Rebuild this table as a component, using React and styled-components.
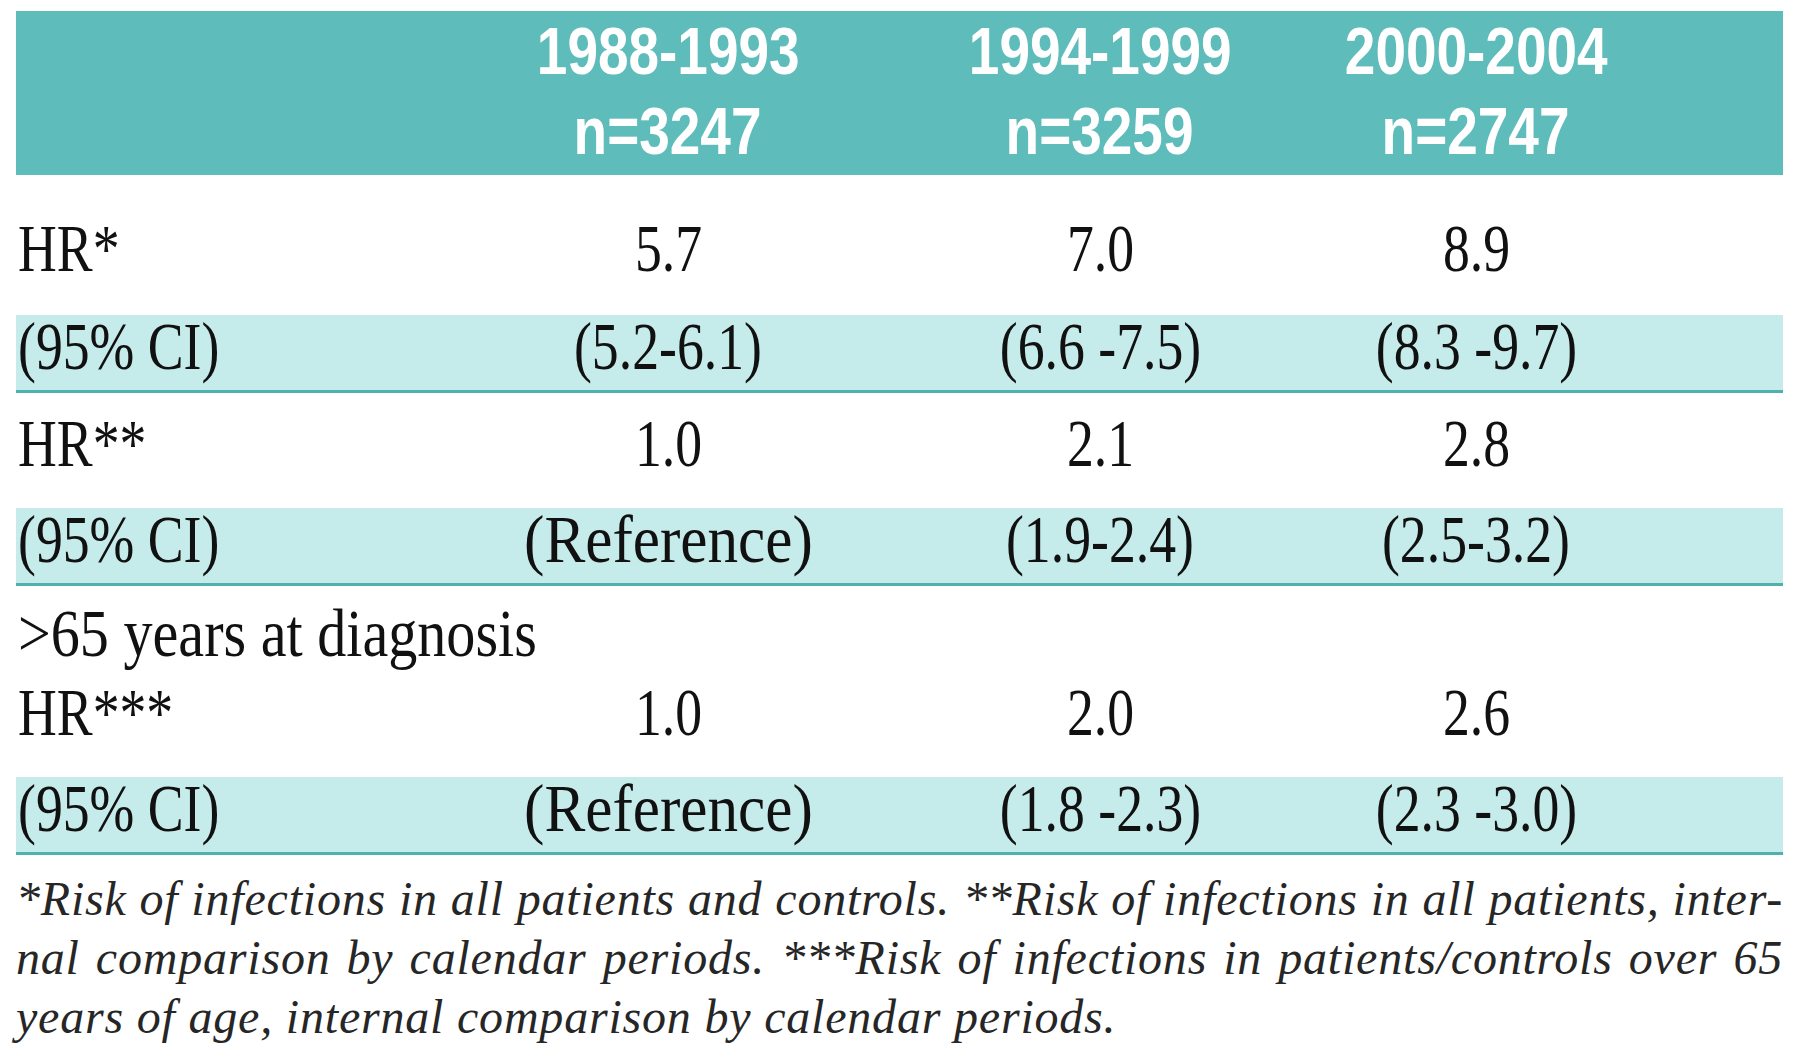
import React from "react";
import styled, { createGlobalStyle } from "styled-components";

const Global = createGlobalStyle`
  html, body { margin: 0; padding: 0; background: #ffffff; }
  body { font-family: "Liberation Serif", "Times New Roman", serif; }
`;

const COLS = "436px 432px 432px 320px 1fr";

const Page = styled.div`
  width: 1767px;
  padding: 11px 17px 0 16px;
`;

const Header = styled.div`
  display: grid;
  grid-template-columns: ${COLS};
  background: #5ebcbb;
  padding-bottom: 4px;
`;

const HeadCell = styled.div`
  display: flex;
  flex-direction: column;
  align-items: center;
  font-family: "Liberation Sans", Arial, sans-serif;
  font-weight: 700;
  font-size: 67px;
  line-height: 80px;
  color: #ffffff;
`;

const Squeeze = styled.span`
  display: inline-block;
  white-space: nowrap;
  transform: scaleX(${(p) => p.$sx || 0.79});
  transform-origin: ${(p) => (p.$left ? "left" : "center")} center;
`;

const Row = styled.div`
  display: grid;
  grid-template-columns: ${COLS};
  box-sizing: border-box;
  height: ${(p) => p.$h}px;
  padding-top: ${(p) => p.$pt || 0}px;
  background: ${(p) => (p.$band ? "#c6ebeb" : "transparent")};
  border-bottom: ${(p) => (p.$band ? "3px solid #4fb1ae" : "none")};
  font-family: "Liberation Serif", "Times New Roman", serif;
  font-size: 68px;
  line-height: ${(p) => p.$lh || 68}px;
  color: #111111;
`;

const Label = styled.div`
  padding-left: 2px;
`;

const Value = styled.div`
  text-align: center;
`;

const SubHead = styled.div`
  box-sizing: border-box;
  height: 87px;
  padding: 8px 0 0 2px;
  font-family: "Liberation Serif", "Times New Roman", serif;
  font-size: 68px;
  line-height: 79px;
  color: #111111;
`;

const Notes = styled.div`
  padding-top: 14px;
  font-family: "Liberation Serif", "Times New Roman", serif;
  font-style: italic;
  font-size: 48px;
  letter-spacing: 0.8px;
  line-height: 59px;
  color: #262626;
`;

const NoteLine = styled.div`
  white-space: nowrap;
  text-align: ${(p) => (p.$justify ? "justify" : "left")};
  text-align-last: ${(p) => (p.$justify ? "justify" : "left")};
`;

const periods = [
  { range: "1988-1993", n: "n=3247" },
  { range: "1994-1999", n: "n=3259" },
  { range: "2000-2004", n: "n=2747" },
];

const DataRow = ({ label, values, ...rest }) => (
  <Row {...rest}>
    <Label>
      <Squeeze $left>{label}</Squeeze>
    </Label>
    {values.map((v, i) => (
      <Value key={i}>
        <Squeeze $sx={v === "(Reference)" ? 0.9 : 0.79}>{v}</Squeeze>
      </Value>
    ))}
    <div />
  </Row>
);

export default function App() {
  return (
    <Page>
      <Global />
      <Header>
        <div />
        {periods.map((p) => (
          <HeadCell key={p.range}>
            <Squeeze $sx={0.82}>{p.range}</Squeeze>
            <Squeeze $sx={0.82}>{p.n}</Squeeze>
          </HeadCell>
        ))}
        <div />
      </Header>

      <DataRow $h={140} $pt={39} label="HR*" values={["5.7", "7.0", "8.9"]} />
      <DataRow
        $h={78}
        $lh={62}
        $band
        label="(95% CI)"
        values={["(5.2-6.1)", "(6.6 -7.5)", "(8.3 -9.7)"]}
      />
      <DataRow $h={115} $pt={16} label="HR**" values={["1.0", "2.1", "2.8"]} />
      <DataRow
        $h={78}
        $lh={62}
        $band
        label="(95% CI)"
        values={["(Reference)", "(1.9-2.4)", "(2.5-3.2)"]}
      />
      <SubHead>
        <Squeeze $left $sx={0.855}>&gt;65 years at diagnosis</Squeeze>
      </SubHead>
      <DataRow $h={104} $lh={79} label="HR***" values={["1.0", "2.0", "2.6"]} />
      <DataRow
        $h={78}
        $lh={62}
        $band
        label="(95% CI)"
        values={["(Reference)", "(1.8 -2.3)", "(2.3 -3.0)"]}
      />

      <Notes>
        <NoteLine $justify>
          *Risk of infections in all patients and controls. **Risk of infections in all patients, inter-
        </NoteLine>
        <NoteLine $justify>
          nal comparison by calendar periods. ***Risk of infections in patients/controls over 65
        </NoteLine>
        <NoteLine>years of age, internal comparison by calendar periods.</NoteLine>
      </Notes>
    </Page>
  );
}
